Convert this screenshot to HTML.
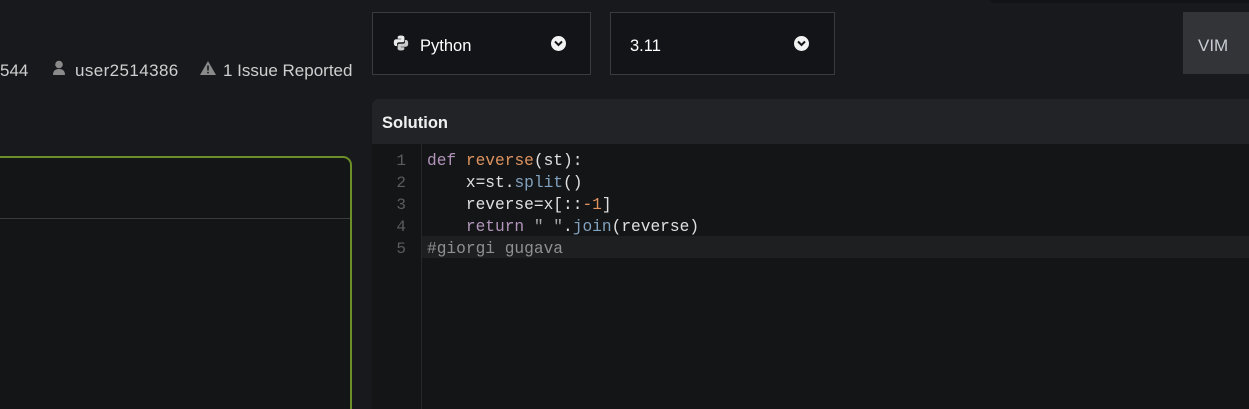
<!DOCTYPE html>
<html><head><style>
*{margin:0;padding:0;box-sizing:border-box}
html,body{width:1249px;height:409px;overflow:hidden}
body{background:#18191d;position:relative;font-family:"Liberation Sans",sans-serif;color:#d0d0d0}
.abs{position:absolute}
.sel{position:absolute;top:12px;height:63px;border:1px solid #3a3b3f;background:#131418;color:#fff;font-size:16.5px}
.chev{position:absolute;top:23px;width:15px;height:15px;border-radius:50%;background:#f2f2f2}
.chev svg{position:absolute;left:3px;top:4px}
.code{position:absolute;left:427px;top:150px;font-family:"Liberation Mono",monospace;font-size:16.2px;line-height:22px;color:#e0e0e0;white-space:pre}
.ln{position:absolute;left:372px;top:150px;width:34px;text-align:right;font-family:"Liberation Mono",monospace;font-size:16px;line-height:22px;color:#5a5c5e;white-space:pre}
.k{color:#b294bb}.f{color:#de935f}.b{color:#81a2be}.c{color:#8e9092}.s{color:#a7a7a7}
.top{position:absolute;top:61px;font-size:17px;color:#cfcfcf;white-space:nowrap}
</style></head><body>
<div class="abs" style="left:990px;top:0;width:259px;height:3px;background:#121316;border-radius:0 0 0 6px"></div>
<div class="top" style="left:0">544</div>
<svg class="abs" style="left:52px;top:60px" width="14" height="16" viewBox="0 0 14 16"><circle cx="7" cy="4.5" r="3.8" fill="#8a8a8a"/><path d="M1 15 Q1 9 7 9 Q13 9 13 15Z" fill="#8a8a8a"/></svg>
<div class="top" style="left:75px;letter-spacing:0.4px">user2514386</div>
<svg class="abs" style="left:199px;top:60px" width="18" height="16" viewBox="0 0 18 16"><path d="M9 1 L17 15 L1 15Z" fill="#8a8a8a"/><rect x="8.2" y="5.5" width="1.6" height="5" fill="#18191d"/><rect x="8.2" y="11.8" width="1.6" height="1.6" fill="#18191d"/></svg>
<div class="top" style="left:223px">1 Issue Reported</div>

<div class="sel" style="left:372px;width:219px">
<svg class="abs" style="left:20px;top:22px" width="16" height="16" viewBox="0 0 16 16"><path d="M8 0.5C4.5 0.5 4.7 2 4.7 2V3.7H8.1V4.3H3.1S0.8 4 0.8 7.6 2.8 11 2.8 11H4V9.3S3.9 7.3 6 7.3H9.5S11.4 7.3 11.4 5.5V2.5S11.7 0.5 8 0.5Z" fill="#eaeaea"/><path d="M8 15.5C11.5 15.5 11.3 14 11.3 14V12.3H7.9V11.7H12.9S15.2 12 15.2 8.4 13.2 5 13.2 5H12V6.7S12.1 8.7 10 8.7H6.5S4.6 8.7 4.6 10.5V13.5S4.3 15.5 8 15.5Z" fill="#c9c9c9"/></svg>
<span class="abs" style="left:47px;top:24px">Python</span>
<div class="chev" style="left:178px"><svg width="9" height="7" viewBox="0 0 9 7"><path d="M1 1.5L4.5 5 8 1.5" stroke="#131418" stroke-width="2" fill="none"/></svg></div>
</div>
<div class="sel" style="left:610px;width:225px">
<span class="abs" style="left:19px;top:24px">3.11</span>
<div class="chev" style="left:183px"><svg width="9" height="7" viewBox="0 0 9 7"><path d="M1 1.5L4.5 5 8 1.5" stroke="#131418" stroke-width="2" fill="none"/></svg></div>
</div>
<div class="abs" style="left:1183px;top:12px;width:66px;height:62px;background:#333438;color:#c8ccd4;font-size:17px;padding:24px 0 0 15px">VIM</div>

<div class="abs" style="left:-10px;top:156px;width:362px;height:270px;border:2px solid #6d8f27;border-radius:9px;background:#141517"></div>
<div class="abs" style="left:0;top:218px;width:350px;height:1px;background:#3a3b3d"></div>

<div class="abs" style="left:372px;top:99px;width:877px;height:45px;background:#222326;border-radius:7px 0 0 0"></div>
<div class="abs" style="left:382px;top:114px;font-size:16.5px;font-weight:bold;color:#f0f0f0">Solution</div>
<div class="abs" style="left:372px;top:144px;width:877px;height:265px;background:#141516"></div>
<div class="abs" style="left:421px;top:144px;width:1px;height:265px;background:#262729"></div>
<div class="abs" style="left:422px;top:236px;width:827px;height:22px;background:#1e1f21"></div>
<div class="ln">1
2
3
4
5</div>
<div class="code"><span class="k">def</span> <span class="f">reverse</span>(st):
    x=st.<span class="b">split</span>()
    reverse=x[::<span class="f">-1</span>]
    <span class="k">return</span> <span class="s">" "</span>.<span class="b">join</span>(reverse)
<span class="c">#giorgi gugava</span></div>
</body></html>
